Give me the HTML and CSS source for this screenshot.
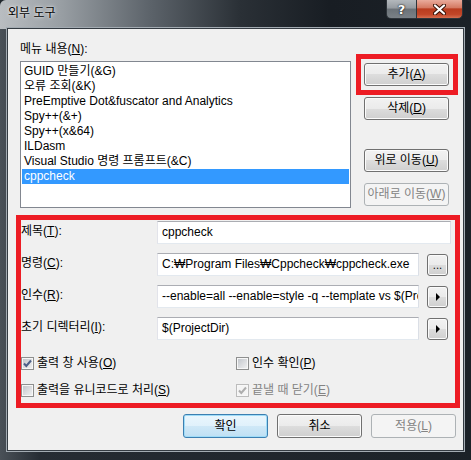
FILE: index.html
```html
<!DOCTYPE html>
<html lang="ko">
<head>
<meta charset="utf-8">
<title>외부 도구</title>
<link rel="stylesheet" href="styles.css">
</head>
<body>
<div class="window">
  <div class="titlebar">
    <span class="title">외부 도구</span>
    <div class="caption">
      <div class="cap help">?</div>
      <div class="cap close">
        <svg width="13" height="11" viewBox="0 0 13 11"><path d="M2 1.5 L11 9.5 M11 1.5 L2 9.5" stroke="#3b1408" stroke-width="4.2" stroke-linecap="round"/><path d="M2 1.5 L11 9.5 M11 1.5 L2 9.5" stroke="#ffffff" stroke-width="2.2" stroke-linecap="round"/></svg>
      </div>
    </div>
  </div>
  <div class="client">
    <div class="top">
      <div class="menu-col">
        <div class="caption-label">메뉴 내용(<u>N</u>):</div>
        <div class="listbox">
          <div class="item">GUID 만들기(&amp;G)</div>
          <div class="item">오류 조회(&amp;K)</div>
          <div class="item">PreEmptive Dot&amp;fuscator and Analytics</div>
          <div class="item">Spy++(&amp;+)</div>
          <div class="item">Spy++(x&amp;64)</div>
          <div class="item">ILDasm</div>
          <div class="item">Visual Studio 명령 프롬프트(&amp;C)</div>
          <div class="item sel">cppcheck</div>
        </div>
      </div>
      <div class="side">
        <div class="btn">추가(<u>A</u>)</div>
        <div class="btn gap-s">삭제(<u>D</u>)</div>
        <div class="btn gap-l">위로 이동(<u>U</u>)</div>
        <div class="btn gap-s disabled">아래로 이동(<u>W</u>)</div>
      </div>
    </div>

    <div class="form">
      <div class="flabel">제목(<u>T</u>):</div>
      <div class="field wide">cppcheck</div>

      <div class="flabel">명령(<u>C</u>):</div>
      <div class="field">C:₩Program Files₩Cppcheck₩cppcheck.exe</div>
      <div class="mini dots">...</div>

      <div class="flabel">인수(<u>R</u>):</div>
      <div class="field">--enable=all --enable=style -q --template vs $(ProjectDir)</div>
      <div class="mini"><svg width="4" height="8" viewBox="0 0 4 8"><path d="M0 0 L4 4 L0 8 Z" fill="#000"/></svg></div>

      <div class="flabel">초기 디렉터리(<u>I</u>):</div>
      <div class="field">$(ProjectDir)</div>
      <div class="mini"><svg width="4" height="8" viewBox="0 0 4 8"><path d="M0 0 L4 4 L0 8 Z" fill="#000"/></svg></div>
    </div>

    <div class="checks">
      <div class="check"><span class="box"><svg width="11" height="11" viewBox="0 0 11 11"><path d="M2 5.5 L4.3 8 L9 2.5" fill="none" stroke="#4d6089" stroke-width="2"/></svg></span>출력 창 사용(<u>O</u>)</div>
      <div class="check"><span class="box"></span>인수 확인(<u>P</u>)</div>
      <div class="check"><span class="box"></span>출력을 유니코드로 처리(<u>S</u>)</div>
      <div class="check disabled"><span class="box"><svg width="11" height="11" viewBox="0 0 11 11"><path d="M2 5.5 L4.3 8 L9 2.5" fill="none" stroke="#adadad" stroke-width="2"/></svg></span>끝낼 때 닫기(<u>E</u>)</div>
    </div>

    <div class="actions">
      <div class="btn wide-btn default">확인</div>
      <div class="btn wide-btn">취소</div>
      <div class="btn wide-btn disabled">적용(<u>L</u>)</div>
    </div>

    <div class="mark mark-add"></div>
    <div class="mark mark-form"></div>
  </div>
</div>
</body>
</html>
```
FILE: styles.css
```css
* { box-sizing: border-box; }
html, body { margin: 0; padding: 0; background: #20262c; }
body {
  font-family: "Liberation Sans", "Noto Sans CJK KR", sans-serif;
  font-size: 12px;
  color: #000;
}
u { text-underline-offset: 1px; }

.window {
  width: 471px;
  height: 460px;
  display: flex;
  flex-direction: column;
  background: linear-gradient(to right, #4a5158 0, #262c33 40px, #1b2127 100%);
  border-radius: 6px 6px 0 0;
  overflow: hidden;
}

.titlebar {
  height: 29px;
  flex: none;
  display: flex;
  justify-content: space-between;
  align-items: flex-start;
  background: linear-gradient(to right, #b9bdc1 0, #999fa4 60px, #5c636a 150px, #2a3036 240px, #181d23 330px, #1b2127 100%);
}
.title {
  padding: 6px 0 0 8px;
  line-height: 15px;
  color: #000;
  text-shadow: 0 0 4px #e8eaec, 0 0 2px #e8eaec;
}
.caption {
  display: flex;
  margin-right: 8px;
}
.cap {
  height: 20px;
  margin-top: -1px;
  border: 1px solid #2e343a;
  display: flex;
  align-items: center;
  justify-content: center;
}
.help {
  width: 30px;
  border-right: none;
  border-radius: 0 0 0 5px;
  background: linear-gradient(#b3b8bc 0, #959ba0 45%, #6b7278 50%, #7a8187 100%);
  color: #fff;
  font: bold 13px "DejaVu Sans", sans-serif;
  text-shadow: 0 0 2px #111, 0 0 1px #111;
}
.close {
  width: 47px;
  border-radius: 0 0 5px 0;
  background: linear-gradient(#e9ab9b 0, #d57a63 42%, #b93c1f 50%, #c24628 80%, #d66d4f 100%);
}

.client {
  position: relative;
  margin: 0 8px;
  height: 421px;
  background: #f0f0f0;
  padding-top: 13px;
  box-shadow: 0 0 0 1px #343b42, 0 0 0 2px #a3abb2;
}

.top {
  display: grid;
  grid-template-columns: 331px 85px;
  column-gap: 13px;
  padding-left: 12px;
}
.caption-label {
  line-height: 15px;
  margin-bottom: 4px;
}
.listbox {
  height: 147px;
  border: 1px solid #828790;
  background: #fff;
  padding: 2px 1px;
}
.item {
  height: 15px;
  line-height: 15px;
  padding-left: 2px;
  white-space: nowrap;
}
.item.sel {
  background: #3399ff;
  color: #fff;
}
.side {
  display: flex;
  flex-direction: column;
  padding-top: 21px;
}
.gap-s { margin-top: 11px; }
.gap-l { margin-top: 29px; }

.btn {
  height: 23px;
  border: 1px solid #707070;
  border-radius: 3px;
  background: linear-gradient(#f2f2f2 0, #ebebeb 50%, #dddddd 50%, #cfcfcf 100%);
  box-shadow: inset 0 0 0 1px #fbfbfb;
  display: flex;
  align-items: center;
  justify-content: center;
  line-height: 15px;
  white-space: nowrap;
}
.btn.disabled {
  border-color: #adb2b5;
  background: #f4f4f4;
  box-shadow: none;
  color: #838383;
}
.btn.default {
  border-color: #3c7fb1;
  box-shadow: inset 0 0 0 1px #9fdcf8;
  background: linear-gradient(#eaf6fd 0, #e0f1fb 50%, #cfe8f7 50%, #bfe0f4 100%);
}

.form {
  display: grid;
  grid-template-columns: 128px 262px 21px;
  column-gap: 8px;
  row-gap: 9px;
  padding-left: 13px;
  margin-top: 13px;
}
.flabel {
  line-height: 15px;
  padding-top: 3px;
  white-space: nowrap;
}
.field {
  height: 23px;
  border: 1px solid;
  border-color: #abadb3 #dbdfe6 #e3e9ef #e2e3ea;
  background: #fff;
  padding: 0 4px;
  line-height: 21px;
  white-space: nowrap;
  overflow: hidden;
}
.field.wide {
  grid-column: 2 / 4;
  width: 294px;
}
.mini {
  width: 21px;
  height: 22px;
  margin-top: 1px;
  border: 1px solid #707070;
  border-radius: 3px;
  background: linear-gradient(#f2f2f2 0, #ebebeb 50%, #dddddd 50%, #cfcfcf 100%);
  box-shadow: inset 0 0 0 1px #fbfbfb;
  display: flex;
  align-items: center;
  justify-content: center;
}
.mini svg { margin-left: 1px; }
.mini.dots {
  align-items: flex-end;
  font: 10px "DejaVu Sans", sans-serif;
  line-height: 12px;
  padding-bottom: 3px;
}

.checks {
  display: grid;
  grid-template-columns: 215px 1fr;
  row-gap: 12px;
  padding-left: 13px;
  margin-top: 16px;
}
.check {
  display: flex;
  align-items: center;
  height: 15px;
  line-height: 15px;
  white-space: nowrap;
}
.box {
  width: 13px;
  height: 13px;
  margin-right: 3px;
  flex: none;
  border: 1px solid #8e8f8f;
  background: linear-gradient(135deg, #bfc3c9 0, #f4f4f4 100%);
  box-shadow: inset 0 0 0 1px #f7f7f7;
  display: flex;
  align-items: center;
  justify-content: center;
}
.check.disabled { color: #838383; }
.check.disabled .box {
  border-color: #bcbcbc;
  background: #f4f4f4;
}

.actions {
  display: flex;
  justify-content: flex-end;
  gap: 9px;
  padding-right: 7px;
  margin-top: 16px;
}
.wide-btn {
  width: 85px;
  height: 24px;
}

.mark {
  position: absolute;
  border: 5px solid #ed1c24;
  pointer-events: none;
}
.mark-add {
  left: 348px;
  top: 25px;
  width: 102px;
  height: 41px;
}
.mark-form {
  left: 8px;
  top: 186px;
  width: 444px;
  height: 193px;
}
```
